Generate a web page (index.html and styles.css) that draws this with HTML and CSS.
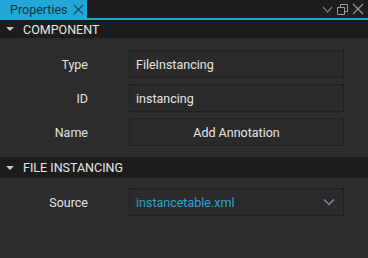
FILE: index.html
```html
<!DOCTYPE html>
<html lang="en">
<head>
<meta charset="UTF-8">
<title>Properties</title>
<link rel="stylesheet" href="styles.css">
</head>
<body>
<div class="panel">
  <div class="tabbar">
    <div class="tab">
      <span class="tab-title">Properties</span>
      <svg class="tab-close" width="11" height="11" viewBox="0 0 11 11"><path d="M1 1L10 10M10 1L1 10" stroke="#1d4a5c" stroke-width="1.2" fill="none"/></svg>
    </div>
    <div class="tab-icons">
      <svg width="11" height="11" viewBox="0 0 11 11"><path d="M1 3L5.5 8L10 3" stroke="#9a9a9a" stroke-width="1.1" fill="none"/></svg>
      <svg width="11" height="11" viewBox="0 0 11 11"><path d="M0.5 3.5H7.5V10.5H0.5Z M3.5 3.5V0.5H10.5V7.5H7.5" stroke="#9a9a9a" stroke-width="1" fill="none"/></svg>
      <svg width="12" height="12" viewBox="0 0 12 12"><path d="M1 1L11 11M11 1L1 11" stroke="#9a9a9a" stroke-width="1.1" fill="none"/></svg>
    </div>
  </div>
  <div class="tabline"></div>

  <div class="section-header">
    <span class="arrow"></span>
    <span>COMPONENT</span>
  </div>
  <div class="rows">
    <div class="row">
      <div class="label">Type</div>
      <div class="field">FileInstancing</div>
    </div>
    <div class="row">
      <div class="label">ID</div>
      <div class="field">instancing</div>
    </div>
    <div class="row">
      <div class="label">Name</div>
      <div class="field button">Add Annotation</div>
    </div>
  </div>

  <div class="section-header second">
    <span class="arrow"></span>
    <span>FILE INSTANCING</span>
  </div>
  <div class="rows">
    <div class="row">
      <div class="label">Source</div>
      <div class="field select">
        <span class="link">instancetable.xml</span>
        <svg width="12" height="8" viewBox="0 0 12 8"><path d="M1 1.5L6 6.5L11 1.5" stroke="#8a9bb0" stroke-width="1.2" fill="none"/></svg>
      </div>
    </div>
  </div>
</div>
</body>
</html>
```

FILE: styles.css
```css
body {
  margin: 0;
  background: #2c2c2c;
  font-family: Roboto, "Open Sans", sans-serif;
  font-size: 12.5px;
  color: #e6e6e6;
}
.panel {
  width: 368px;
  height: 258px;
  background: #2c2c2c;
}
.tabbar {
  display: flex;
  height: 18px;
  background: #1d1d1d;
}
.tab {
  display: flex;
  align-items: center;
  width: 87px;
  background: #22a7d6;
  padding-left: 10px;
  box-sizing: border-box;
  overflow: hidden;
}
.tab-title {
  color: #0f3342;
  font-size: 12.5px;
  white-space: nowrap;
}
.tab-close {
  flex-shrink: 0;
  margin-left: 5px;
}
.tab-icons {
  display: flex;
  align-items: center;
  gap: 4px;
  margin-left: auto;
  padding-right: 4px;
}
.tabline {
  height: 2px;
  background: #22a7d6;
}
.section-header {
  display: flex;
  align-items: center;
  height: 18px;
  background: #1c1c1c;
  color: #e8e8e8;
  font-size: 12.5px;
  padding-left: 6px;
}
.section-header.second {
  height: 21px;
  margin-top: 11px;
}
.arrow {
  width: 0;
  height: 0;
  border-left: 4px solid transparent;
  border-right: 4px solid transparent;
  border-top: 4px solid #c8c8c8;
  margin-right: 9px;
}
.rows {
  display: flex;
  flex-direction: column;
  gap: 6px;
  padding-top: 12px;
}
.section-header.second + .rows {
  padding-top: 10px;
}
.row {
  display: flex;
  align-items: center;
  gap: 41px;
}
.label {
  width: 88px;
  text-align: right;
  color: #e2e2e2;
}
.field {
  display: flex;
  align-items: center;
  width: 215px;
  height: 28px;
  box-sizing: border-box;
  border: 1px dotted #161616;
  background: #2a2a2a;
  padding-left: 6px;
  color: #e6e6e6;
}
.button {
  justify-content: center;
  padding-left: 0;
}
.select {
  justify-content: space-between;
  padding-right: 8px;
}
.link {
  color: #2aa4d4;
}
```
